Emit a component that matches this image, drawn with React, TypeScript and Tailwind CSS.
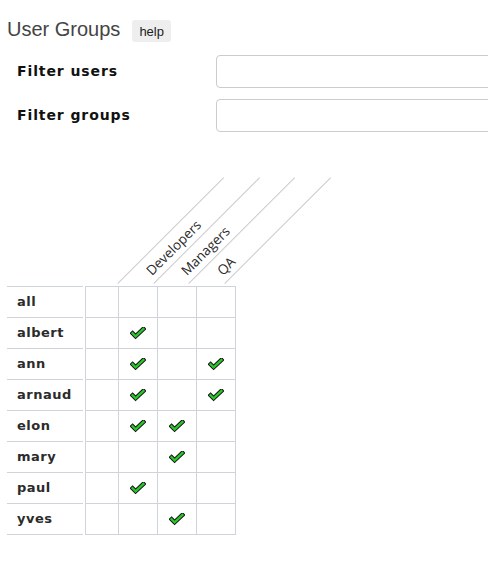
import React from 'react';

const groups = ['Developers', 'Managers', 'QA'];

const users: { name: string; g: boolean[] }[] = [
  { name: 'all', g: [false, false, false] },
  { name: 'albert', g: [true, false, false] },
  { name: 'ann', g: [true, false, true] },
  { name: 'arnaud', g: [true, false, true] },
  { name: 'elon', g: [true, true, false] },
  { name: 'mary', g: [false, true, false] },
  { name: 'paul', g: [true, false, false] },
  { name: 'yves', g: [false, true, false] },
];

function Check() {
  return (
    <svg width="16" height="13" viewBox="0 0 16 13">
      <polyline points="2.6,6.3 5.6,9.3 13.4,1.9" fill="none" stroke="#141414" strokeWidth="4.4" strokeLinejoin="miter" strokeLinecap="square" />
      <polyline points="2.6,6.3 5.6,9.3 13.4,1.9" fill="none" stroke="#2cc52c" strokeWidth="2.4" strokeLinejoin="miter" strokeLinecap="square" />
    </svg>
  );
}

function HeaderCell({ label }: { label: string }) {
  return (
    <div className="w-[35.5px] h-[106px] flex items-end shrink-0">
      <div className="w-[150px] shrink-0 origin-bottom-left -rotate-45 border-b border-[#cccccc]">
        <span className="block pl-[4px] pb-[2px] leading-[18px] h-[20px] text-[13.5px] text-[#2a2a2a] whitespace-nowrap font-['Open_Sans','Noto_Sans',sans-serif]">
          {label}
        </span>
      </div>
    </div>
  );
}

export default function App() {
  return (
    <div className="w-[488px] h-[574px] overflow-hidden bg-white pl-[7px]">
      <div className="flex items-baseline pt-[18px] h-[42px]">
        <h1 className="text-[20px] leading-[23px] font-normal text-[#444] font-['Liberation_Sans',Arial,sans-serif]">
          User Groups
        </h1>
        <span className="ml-[12px] h-[22px] px-[7px] pt-[4px] leading-[15px] text-[13px] text-[#222] bg-[#eeeeee] rounded-[3px] font-['Liberation_Sans',Arial,sans-serif]">
          help
        </span>
      </div>

      <div className="mt-[13px] flex flex-col gap-[11px]">
        {['Filter users', 'Filter groups'].map((l) => (
          <div key={l} className="flex items-center h-[33px]">
            <label className="w-[209px] pl-[10px] shrink-0 text-[14px] font-bold tracking-[0.9px] text-[#111] font-['DejaVu_Sans',Verdana,sans-serif]">
              {l}
            </label>
            <input className="w-[320px] h-[33px] shrink-0 border border-[#cccccc] rounded-[4px] bg-white outline-none" />
          </div>
        ))}
      </div>

      <div className="mt-[46px] flex">
        <div className="w-[111px] shrink-0" />
        <HeaderCell label="" />
        {groups.map((g) => (
          <HeaderCell key={g} label={g} />
        ))}
      </div>

      <div className="mt-[2px] flex">
        <div className="w-[76px] flex flex-col border-t border-[#cfd4da]">
          {users.map((u) => (
            <div
              key={u.name}
              className="h-[31px] flex items-center pl-[10px] border-b border-[#cfd4da] text-[13px] font-bold tracking-[0.5px] text-[#2b2b2b] font-['DejaVu_Sans',Verdana,sans-serif]"
            >
              {u.name}
            </div>
          ))}
        </div>
        <div className="ml-[2px] flex flex-col border-t border-l border-[#cfd4da]">
          {users.map((u) => (
            <div key={u.name} className="flex">
              <div className="w-[33px] h-[31px] border-r border-b border-[#cfd4da]" />
              {u.g.map((v, i) => (
                <div key={i} className="w-[39px] h-[31px] flex items-center justify-center border-r border-b border-[#cfd4da]">
                  {v ? <Check /> : null}
                </div>
              ))}
            </div>
          ))}
        </div>
      </div>
    </div>
  );
}
